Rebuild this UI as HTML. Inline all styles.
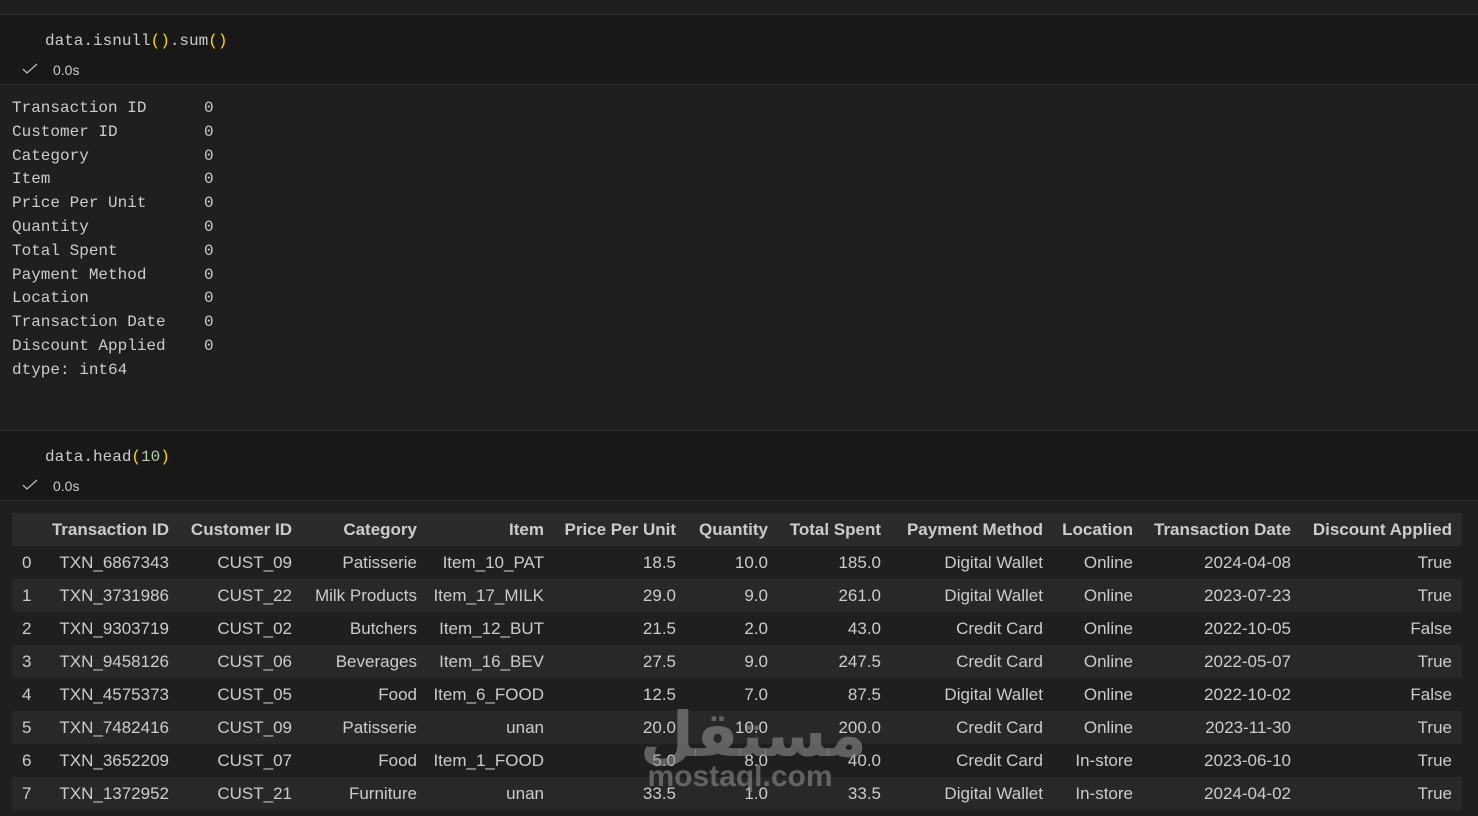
<!DOCTYPE html>
<html><head><meta charset="utf-8"><style>
body{margin:0;width:1478px;height:816px;background:#1f1f1f;overflow:hidden;position:relative;color:#cccccc;font-family:"Liberation Sans",sans-serif}
.cell{position:absolute;left:0;width:1478px;background:#181818;border-top:1px solid #2b2b2b;border-bottom:1px solid #2b2b2b;height:69px}
.code{position:absolute;left:45px;top:17px;font:16px "Liberation Mono",monospace;color:#cccccc}
.p{color:#ffd700}
.n{color:#b5cea8}
.chk{position:absolute;left:22px;top:46px;font-size:14px;color:#cccccc}
.chk svg{position:absolute;left:0;top:2px}
.chk span{position:absolute;left:31px;top:1px;white-space:nowrap}
pre{position:absolute;left:12px;top:97px;margin:0;font:16px/23.8px "Liberation Mono",monospace;color:#cccccc}
table{position:absolute;left:12px;top:513px;width:1450px;table-layout:fixed;border-collapse:collapse;font-size:17px;color:#cccccc}
th,td{height:33px;padding:0 10px 0 0;text-align:right;white-space:nowrap;overflow:visible}
th{font-weight:bold;background:#2b2b2b}
tr:nth-child(odd) td{background:#282828}
td:first-child,th:first-child{text-align:left;padding-left:10px}
.wm{position:absolute;left:640px;top:704px;width:200px;color:rgba(140,140,140,.6);font-weight:bold;text-align:center;line-height:1}
</style></head><body>
<div class="cell" style="top:14px">
<div class="code">data.isnull<span class="p">()</span>.sum<span class="p">()</span></div>
<div class="chk"><svg width="16" height="12"><path d="M1 6l4 4 10-9" fill="none" stroke="#bbb" stroke-width="1.3"/></svg><span>0.0s</span></div>
</div>
<pre>Transaction ID      0
Customer ID         0
Category            0
Item                0
Price Per Unit      0
Quantity            0
Total Spent         0
Payment Method      0
Location            0
Transaction Date    0
Discount Applied    0
dtype: int64</pre>
<div class="cell" style="top:430px">
<div class="code">data.head<span class="p">(</span><span class="n">10</span><span class="p">)</span></div>
<div class="chk"><svg width="16" height="12"><path d="M1 6l4 4 10-9" fill="none" stroke="#bbb" stroke-width="1.3"/></svg><span>0.0s</span></div>
</div>
<table>
<colgroup><col style="width:30px"><col style="width:137px"><col style="width:123px"><col style="width:125px"><col style="width:127px"><col style="width:132px"><col style="width:92px"><col style="width:113px"><col style="width:162px"><col style="width:90px"><col style="width:158px"><col style="width:161px"></colgroup>
<tr><th></th><th>Transaction ID</th><th>Customer ID</th><th>Category</th><th>Item</th><th>Price Per Unit</th><th>Quantity</th><th>Total Spent</th><th>Payment Method</th><th>Location</th><th>Transaction Date</th><th>Discount Applied</th></tr>
<tr><td>0</td><td>TXN_6867343</td><td>CUST_09</td><td>Patisserie</td><td>Item_10_PAT</td><td>18.5</td><td>10.0</td><td>185.0</td><td>Digital Wallet</td><td>Online</td><td>2024-04-08</td><td>True</td></tr>
<tr><td>1</td><td>TXN_3731986</td><td>CUST_22</td><td>Milk Products</td><td>Item_17_MILK</td><td>29.0</td><td>9.0</td><td>261.0</td><td>Digital Wallet</td><td>Online</td><td>2023-07-23</td><td>True</td></tr>
<tr><td>2</td><td>TXN_9303719</td><td>CUST_02</td><td>Butchers</td><td>Item_12_BUT</td><td>21.5</td><td>2.0</td><td>43.0</td><td>Credit Card</td><td>Online</td><td>2022-10-05</td><td>False</td></tr>
<tr><td>3</td><td>TXN_9458126</td><td>CUST_06</td><td>Beverages</td><td>Item_16_BEV</td><td>27.5</td><td>9.0</td><td>247.5</td><td>Credit Card</td><td>Online</td><td>2022-05-07</td><td>True</td></tr>
<tr><td>4</td><td>TXN_4575373</td><td>CUST_05</td><td>Food</td><td>Item_6_FOOD</td><td>12.5</td><td>7.0</td><td>87.5</td><td>Digital Wallet</td><td>Online</td><td>2022-10-02</td><td>False</td></tr>
<tr><td>5</td><td>TXN_7482416</td><td>CUST_09</td><td>Patisserie</td><td>unan</td><td>20.0</td><td>10.0</td><td>200.0</td><td>Credit Card</td><td>Online</td><td>2023-11-30</td><td>True</td></tr>
<tr><td>6</td><td>TXN_3652209</td><td>CUST_07</td><td>Food</td><td>Item_1_FOOD</td><td>5.0</td><td>8.0</td><td>40.0</td><td>Credit Card</td><td>In-store</td><td>2023-06-10</td><td>True</td></tr>
<tr><td>7</td><td>TXN_1372952</td><td>CUST_21</td><td>Furniture</td><td>unan</td><td>33.5</td><td>1.0</td><td>33.5</td><td>Digital Wallet</td><td>In-store</td><td>2024-04-02</td><td>True</td></tr>
</table>
<div class="wm"><div style="font-size:62px;font-family:'DejaVu Sans',sans-serif">مستقل</div><div style="font-size:30px;margin-top:-4px">mostaql.com</div></div>
</body></html>
